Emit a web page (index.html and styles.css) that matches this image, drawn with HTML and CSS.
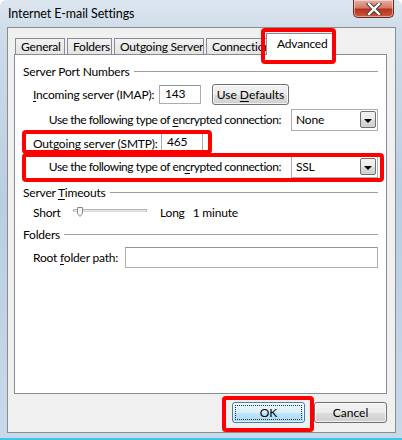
FILE: index.html
```html
<!DOCTYPE html>
<html lang="en">
<head>
	<meta charset="UTF-8">
	<title>Internet E-mail Settings</title>
	<link rel="stylesheet" href="styles.css">
</head>
<body>
	<div class="window">
		<!-- 标题栏 -->
		<div class="titlebar">
			<span class="title">Internet E-mail Settings</span>
			<div class="close">
				<svg width="16" height="12" viewBox="0 0 16 12">
					<path d="M3 1 L13 11 M13 1 L3 11" stroke="#3a3a3a" stroke-width="4.2" stroke-linecap="square"/>
					<path d="M3 1 L13 11 M13 1 L3 11" stroke="#fff" stroke-width="2.4" stroke-linecap="square"/>
				</svg>
			</div>
		</div>

		<div class="client">
			<div class="tabs">
				<div class="tab tab-general">General</div>
				<div class="tab tab-folders">Folders</div>
				<div class="tab tab-outgoing">Outgoing Server</div>
				<div class="tab tab-connection">Connection</div>
				<div class="tab selected">Advanced</div>
			</div>

			<div class="panel">
				<div class="group"><span>Server Port Numbers</span><i></i></div>

				<div class="row row-imap">
					<label class="label"><u>I</u>ncoming server (IMAP):</label>
					<div class="textbox port">143</div>
					<button class="btn defaults">Use <u>D</u>efaults</button>
				</div>
				<div class="row row-enc">
					<label class="label">Use the following type of <u>e</u>ncrypted connection:</label>
					<div class="combo"><span>None</span><b class="drop"><em></em></b></div>
				</div>
				<div class="row row-smtp">
					<label class="label"><u>O</u>utgoing server (SMTP):</label>
					<div class="textbox port port2">465</div>
				</div>
				<div class="row row-enc row-enc2">
					<label class="label">Use the following type of en<u>c</u>rypted connection:</label>
					<div class="combo"><span>SSL</span><b class="drop"><em></em></b></div>
				</div>

				<div class="group group-time"><span>Server <u>T</u>imeouts</span><i></i></div>
				<div class="row row-slider">
					<span class="label">Short</span>
					<svg class="slider" width="75" height="12" viewBox="0 0 75 12">
						<rect x="0.5" y="3.5" width="73" height="2" fill="#e7e7e7" stroke="#b5b5b5"/>
						<line x1="1" y1="6" x2="73" y2="6" stroke="#fff"/>
						<path d="M4.5 1.5 H9.5 V7.5 L7 10.5 L4.5 7.5 Z" fill="#f4f4f4" stroke="#8a8a8a"/>
					</svg>
					<span class="long">Long</span>
					<span class="minute">1 minute</span>
				</div>

				<div class="group group-folders"><span>Folders</span><i></i></div>
				<div class="row row-root">
					<label class="label">Root <u>f</u>older path:</label>
					<div class="textbox root"></div>
				</div>
			</div>

			<div class="buttons">
				<button class="btn ok"><span>OK</span></button>
				<button class="btn">Cancel</button>
			</div>
		</div>

		<!-- 红色标注 -->
		<div class="mark mark-tab"></div>
		<div class="mark mark-smtp"></div>
		<div class="mark mark-enc"></div>
		<div class="mark mark-ok"></div>
	</div>
</body>
</html>
```

FILE: styles.css
```css
*{
	margin: 0px;
	padding: 0px;
	box-sizing: border-box;
}
body{
	background-color: #fff;
	font: 12px Lato, "Noto Sans", sans-serif;
	letter-spacing: -0.2px;
	color: #000;
}
u{
	text-decoration: underline;
	text-underline-offset: 2px;
}

/*窗口外框*/
.window{
	position: relative;
	width: 402px;
	height: 440px;
	display: flex;
	flex-direction: column;
	background: linear-gradient(180deg, #dce6ef 0px, #cfdce9 30px, #b9cee2 200px, #c8d9ea 440px);
	border-bottom: 2px solid #3fc4ee;
	border-radius: 6px 6px 0 0;
	overflow: hidden;
}
.titlebar{
	height: 27px;
	display: flex;
	justify-content: space-between;
	padding-left: 8px;
}
.title{
	line-height: 28px;
	font-size: 12.5px;
	letter-spacing: -0.1px;
}
.close{
	width: 41px;
	height: 18px;
	margin-right: 8px;
	border: 1px solid #5e2c26;
	border-top: none;
	border-radius: 0 0 5px 5px;
	background: linear-gradient(180deg, #e8b0a2 0%, #d47a66 45%, #b8321e 55%, #d0573c 100%);
	display: flex;
	align-items: center;
	justify-content: center;
	box-shadow: inset 0 0 0 1px rgba(255,255,255,.45);
}

/*客户区*/
.client{
	flex: 1;
	margin: 0 6px 5px 7px;
	background-color: #f0f0f0;
	border: 1px solid #8c8c8c;
	display: flex;
	flex-direction: column;
	padding: 6px 8px 0 6px;
}

/*选项卡*/
.tabs{
	height: 21px;
	display: flex;
	align-items: flex-end;
	padding-left: 1px;
	position: relative;
	z-index: 1;
	margin-bottom: -1px;
}
.tab{
	height: 16px;
	margin-right: 2px;
	margin-bottom: 1px;
	border: 1px solid #898c95;
	border-bottom: none;
	background: linear-gradient(180deg, #f2f2f2, #e4e4e4);
	padding-left: 5px;
	line-height: 15px;
	white-space: nowrap;
	overflow: hidden;
}
.tab-general{ width: 50px; }
.tab-folders{ width: 45px; }
.tab-outgoing{ width: 90px; }
.tab-connection{ width: 66px; margin-right: 0; }
.tab.selected{
	width: 69px;
	height: 22px;
	margin: 0 0 0 -6px;
	background: #fff;
	padding-left: 10px;
	line-height: 19px;
}

.panel{
	height: 340px;
	background-color: #fff;
	border: 1px solid #898c95;
	padding: 8px 8px 0 8px;
}
.group{
	display: flex;
	align-items: center;
	height: 16px;
	white-space: nowrap;
}
.group i{
	flex: 1;
	height: 1px;
	margin-left: 4px;
	background-color: #a0a0a0;
}
.group-time{ margin-top: 7px; }
.group-folders{ margin-top: 6px; }

.row{
	display: flex;
	align-items: center;
	padding-left: 10px;
	white-space: nowrap;
}
.row-imap{
	height: 20px;
	margin-top: 5px;
}
.row-imap .label{ width: 126px; }
.row-enc{
	height: 21px;
	margin-top: 5px;
	justify-content: flex-end;
}
.row-enc .label{
	margin-right: 10px;
	letter-spacing: -0.45px;
}
.row-enc2{ margin-top: 2px; }
.row-smtp{
	height: 21px;
	margin-top: 3px;
}
.row-smtp .label{ width: 128px; }
.row-slider{
	height: 16px;
	margin-top: 4px;
}
.row-slider .label{ width: 40px; }
.long{ margin-left: 12px; }
.minute{ margin-left: 8px; }
.row-root{
	height: 20px;
	margin-top: 5px;
}
.row-root .label{ width: 92px; }

/*输入框*/
.textbox{
	height: 19px;
	border: 1px solid #abadb3;
	border-top-color: #8f959c;
	background-color: #fff;
	padding-left: 5px;
	line-height: 16px;
}
.port{
	width: 42px;
	margin-right: 11px;
}
.port2{ height: 21px; }
.root{ width: 254px; height: 21px; }

/*下拉框*/
.combo{
	width: 87px;
	height: 22px;
	border: 1px solid #abadb3;
	background-color: #fff;
	display: flex;
	align-items: center;
	justify-content: space-between;
	padding: 0 1px 0 4px;
}
.drop{
	width: 16px;
	height: 17px;
	border: 1px solid #707070;
	border-radius: 2px;
	background: linear-gradient(180deg, #f2f2f2 0%, #ebebeb 50%, #dddddd 51%, #cfcfcf 100%);
	display: flex;
	align-items: center;
	justify-content: center;
}
.drop em{
	width: 0;
	height: 0;
	border-left: 4px solid transparent;
	border-right: 4px solid transparent;
	border-top: 4px solid #000;
	margin-top: 2px;
}

/*按钮*/
.btn{
	font: inherit;
	color: #000;
	height: 21px;
	border: 1px solid #707070;
	border-radius: 3px;
	background: linear-gradient(180deg, #f2f2f2 0%, #ebebeb 50%, #dddddd 51%, #cfcfcf 100%);
	box-shadow: inset 0 0 0 1px rgba(255,255,255,.7);
}
.defaults{ width: 77px; }
.buttons{
	display: flex;
	justify-content: flex-end;
	gap: 9px;
	padding-top: 8px;
}
.buttons .btn{ width: 73px; }
.ok{
	border-color: #3c7fb1;
	background: linear-gradient(180deg, #eaf6fd 0%, #d9effc 50%, #bee6fd 51%, #a7d9f5 100%);
	padding: 2px;
}
.ok span{
	display: block;
	height: 15px;
	line-height: 13px;
	border: 1px dotted #333;
}

/*红色标注*/
.mark{
	position: absolute;
	border: 4px solid #ff0000;
	border-radius: 4px;
	z-index: 5;
}
.mark-tab{ left: 261px; top: 28px; width: 75px; height: 36px; }
.mark-smtp{ left: 22px; top: 130px; width: 190px; height: 24px; }
.mark-enc{ left: 22px; top: 153px; width: 362px; height: 29px; }
.mark-ok{ left: 222px; top: 396px; width: 92px; height: 36px; }
```
